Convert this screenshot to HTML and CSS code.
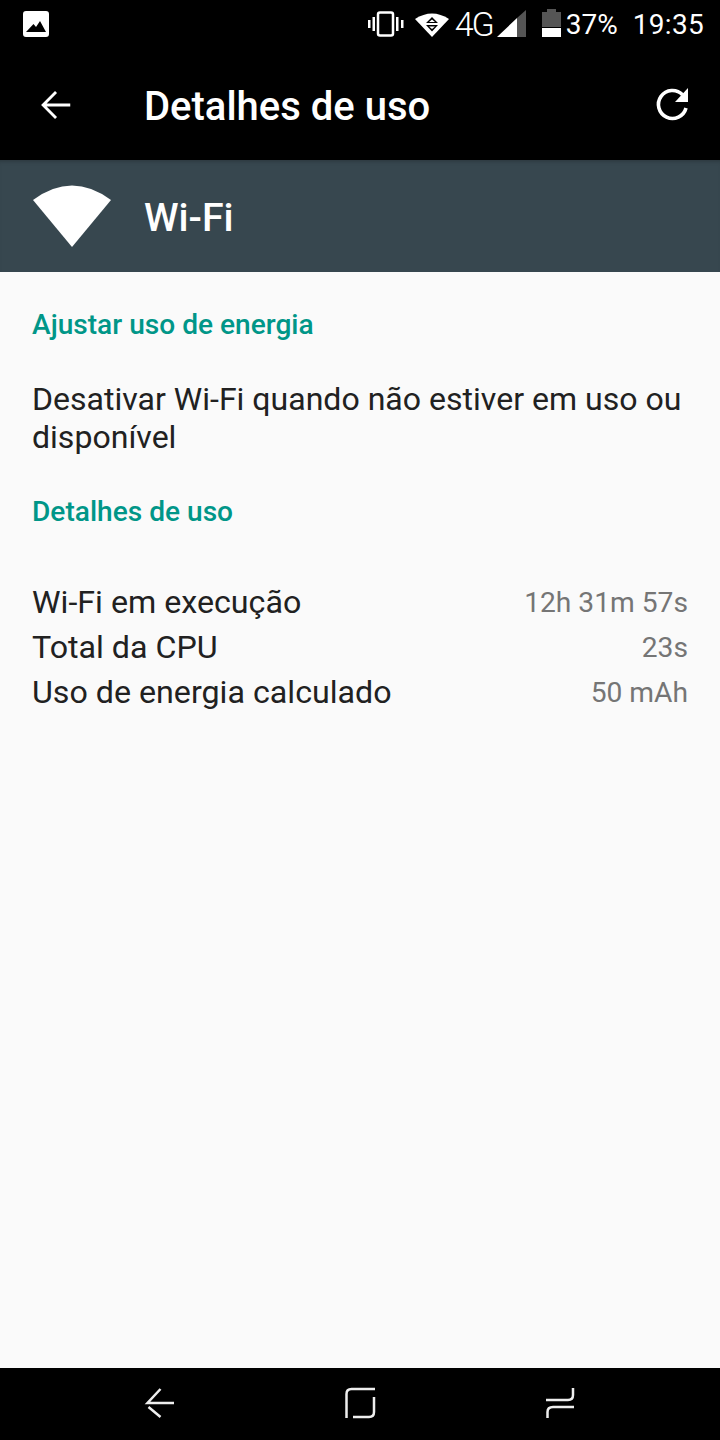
FILE: index.html
```html
<!DOCTYPE html>
<html>
<head>
    <title>Detalhes de uso</title>
    <link rel="stylesheet" href="styles.css">
</head>
<body>
    <div class="status-bar">
        <svg class="ic-image" width="26" height="26" viewBox="0 0 26 26">
            <path fill="#fff" fill-rule="evenodd" d="M3 0H23a3 3 0 0 1 3 3V23a3 3 0 0 1-3 3H3a3 3 0 0 1-3-3V3a3 3 0 0 1 3-3ZM3 21H23L17 10 13 16 10.500 13Z"/>
        </svg>
        <div class="status-right">
            <svg class="ic-vibrate" width="36" height="26" viewBox="0 0 36 26">
                <rect x="10" y="1.500" width="15" height="23" rx="2" fill="none" stroke="#fff" stroke-width="2.500"/>
                <rect x="0" y="9" width="2.500" height="8" fill="#fff"/>
                <rect x="4.500" y="6" width="2.500" height="14" fill="#fff"/>
                <rect x="28" y="6" width="2.500" height="14" fill="#fff"/>
                <rect x="33" y="9" width="2.500" height="8" fill="#fff"/>
            </svg>
            <svg class="ic-wifi-small" width="34" height="26" viewBox="0 0 34 26">
                <path fill="#fff" d="M0 8Q17 -3 34 8L17 26Z"/>
                <path fill="#000" d="M17 6 23 12H11ZM11 14H23L17 20.500Z"/>
                <path fill="#fff" d="M17 8.500 20 11H14ZM14 15.500H20L17 18Z"/>
            </svg>
            <span class="net">4G</span>
            <svg class="ic-signal" width="30" height="30" viewBox="0 0 30 30">
                <path fill="#fff" d="M1 28 21 9V28Z"/>
                <path fill="#555" d="M21 9 30 1V28H21Z"/>
            </svg>
            <svg class="ic-battery" width="19" height="30" viewBox="0 0 19 30">
                <path fill="#555" d="M5 0H14V3H19V18H0V3H5Z"/>
                <rect y="19" width="19" height="9" fill="#fff"/>
            </svg>
            <span class="pct">37%</span>
            <span class="clock">19:35</span>
        </div>
    </div>

    <div class="app-bar">
        <svg class="ic-back" width="36" height="36" viewBox="0 0 36 36">
            <path fill="none" stroke="#fff" stroke-width="3.200" d="M34 18H4M18 3.500 3.500 18 18 32.500" transform="translate(2 2) scale(.89)"/>
        </svg>
        <h1 class="app-title">Detalhes de uso</h1>
        <svg class="ic-refresh" width="36" height="36" viewBox="0 0 36 36">
            <path fill="none" stroke="#fff" stroke-width="3.600" d="M32 21A14 14 0 1 1 28.500 7.700"/>
            <path fill="#fff" d="M34 1V15H21Z"/>
        </svg>
    </div>

    <div class="app-header">
        <svg class="ic-wifi" width="80" height="62" viewBox="0 0 80 62">
            <path fill="#fff" d="M1 15Q40 -14 79 15L40 62Z"/>
        </svg>
        <span class="header-label">Wi-Fi</span>
    </div>

    <main class="content">
        <h2 class="section-title first">Ajustar uso de energia</h2>
        <p class="pref">Desativar Wi-Fi quando não estiver em uso ou disponível</p>
        <h2 class="section-title">Detalhes de uso</h2>
        <ul class="details">
            <li><span>Wi-Fi em execução</span><span class="value">12h 31m 57s</span></li>
            <li><span>Total da CPU</span><span class="value">23s</span></li>
            <li><span>Uso de energia calculado</span><span class="value">50 mAh</span></li>
        </ul>
    </main>

    <div class="nav-bar">
        <svg width="32" height="32" viewBox="0 0 32 32">
            <path fill="none" stroke="#eee" stroke-width="2.500" d="M16.500 2 3.500 16H30M4.500 20 16.500 30"/>
        </svg>
        <svg width="32" height="32" viewBox="0 0 32 32">
            <path fill="none" stroke="#eee" stroke-width="2.500" d="M1.500 31V7Q1.500 2 6.500 2H30M29 10V25Q29 30 24 30H8"/>
        </svg>
        <svg width="30" height="32" viewBox="0 0 30 32">
            <path fill="none" stroke="#eee" stroke-width="2.500" d="M0 13H22Q27 13 27 8V1M28 20H7Q1.500 20 1.500 25V31"/>
        </svg>
    </div>
</body>
</html>
```

FILE: styles.css
```css
* { box-sizing: border-box; }
html, body { margin: 0; padding: 0; }
body { width: 720px; height: 1440px; display: flex; flex-direction: column; background-color: #fafafa; font-family: Roboto, "Noto Sans", sans-serif; overflow: hidden; }
svg { display: block; flex: none; }

.status-bar { height: 50px; flex: none; display: flex; align-items: center; justify-content: space-between; padding: 0 16px 2px 23px; background-color: #000; color: #fff; }
.status-right { display: flex; align-items: center; }
.ic-vibrate { margin-right: 11px; }
.ic-wifi-small { margin-right: 6px; }
.net { font-size: 34px; font-weight: 300; letter-spacing: -2px; margin-right: 3px; }
.ic-signal { margin-right: 16px; }
.ic-battery { margin-right: 5px; }
.pct { font-size: 28px; margin-right: 15px; }
.clock { font-size: 28px; letter-spacing: .3px; }

.app-bar { height: 110px; flex: none; display: flex; align-items: center; padding: 0 30px 0 38px; background-color: #000; color: #fff; }
.app-title { flex: 1; margin: 0 0 0 70px; padding-top: 2px; font-size: 40px; font-weight: 500; }

.app-header { height: 112px; flex: none; display: flex; align-items: center; padding-left: 32px; background-color: #37474f; color: #fff; box-shadow: inset 0 4px 4px -3px rgba(0, 0, 0, .25); }
.header-label { margin-left: 32px; padding-top: 3px; font-size: 39.300px; font-weight: 500; }

.content { flex: 1; padding: 0 32px; }
.section-title { margin: 0; font-size: 28.100px; line-height: 36px; font-weight: 500; color: #009688; }
.section-title.first { margin-top: 35px; }
.pref { margin: 37px 0 38px; font-size: 32.050px; line-height: 38px; color: #212121; }
.details { list-style: none; margin: 49px 0 0; padding: 0; }
.details li { display: flex; justify-content: space-between; height: 45px; align-items: center; font-size: 32.200px; color: #212121; }
.value { padding-top: 2px; font-size: 28.200px; color: #757575; }

.nav-bar { height: 72px; flex: none; display: flex; align-items: center; justify-content: space-between; padding: 0 144px 2px; background-color: #000; }
```
